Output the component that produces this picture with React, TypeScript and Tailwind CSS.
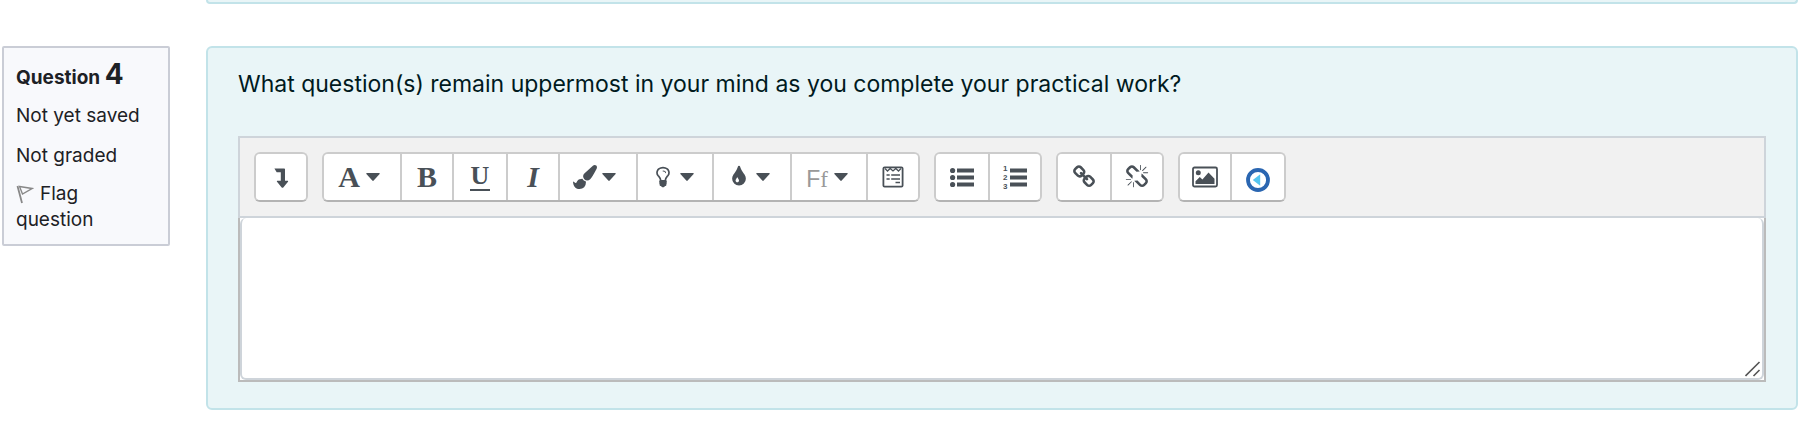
import clsx from "clsx";
import type { ReactNode } from "react";

interface ToolButtonProps {
	label: string;
	children: ReactNode;
	menu?: boolean;
	className?: string;
}

function Caret() {
	return (
		<svg viewBox="0 0 14 8" className="h-2 w-3.5 shrink-0" fill="currentColor" aria-hidden>
			<path d="M.8 0h12.4q.8.2.4.9L7.7 7.6q-.7.6-1.4 0L.4.9Q0 .2.8 0z" />
		</svg>
	);
}

function ToolButton({ label, children, menu = false, className }: ToolButtonProps) {
	return (
		<button
			type="button"
			title={label}
			aria-label={label}
			aria-haspopup={menu ? "menu" : undefined}
			className={clsx(
				"box-content flex h-[46px] items-center border-r-2 border-[#cccccc] bg-white text-[#495057] last:border-r-0 hover:bg-gray-100",
				menu ? "gap-1 pl-3" : "justify-center",
				className,
			)}
		>
			{menu ? (
				<>
					<span className="flex w-[26px] justify-center">{children}</span>
					<Caret />
				</>
			) : (
				children
			)}
		</button>
	);
}

function ToolGroup({ children }: { children: ReactNode }) {
	return (
		<div
			role="group"
			className="flex overflow-hidden rounded-md border-2 border-[#cccccc] border-b-[#b3b3b3]"
		>
			{children}
		</div>
	);
}

function GlyphIcon({ d }: { d: string }) {
	return (
		<svg viewBox="0 0 1792 1792" className="size-6 shrink-0" fill="currentColor" aria-hidden>
			<path d={d} />
		</svg>
	);
}

const BRUSH =
	"M1615 0q70 0 122.5 46.5t52.5 116.5q0 63-45 151-332 629-465 752-97 91-218 91-126 0-216.5-92.5t-90.5-219.5q0-128 92-212l638-579q59-54 130-54zm-909 1034q39 76 106.5 130t150.5 76l1 71q4 213-129.5 347t-348.5 134q-123 0-218-46.5t-152.5-127.5-86.5-183-29-220q7 5 41 30t62 44.5 59 36.5 46 17q41 0 55-37 25-66 57.5-112.5t69.5-76 88-47.5 103-25.5 125-10.5z";
const BULB =
	"M1120 576q0 13-9.5 22.5t-22.5 9.5-22.5-9.5-9.5-22.5q0-46-54-71t-106-25q-13 0-22.5-9.5t-9.5-22.5 9.5-22.5 22.5-9.5q50 0 99.5 16t87 54 37.5 90zm160 0q0-72-34.5-134t-90-101.5-123-62-136.5-22.5-136.5 22.5-123 62-90 101.5-34.5 134q0 101 68 180 10 11 30.5 33t30.5 33q128 153 141 298h228q13-145 141-298 10-11 30.5-33t30.5-33q68-79 68-180zm128 0q0 155-103 268-45 49-74.5 87t-59.5 95.5-34 107.5q47 28 47 82 0 37-25 64 25 27 25 64 0 52-45 81 13 23 13 47 0 46-31.5 71t-77.5 25q-20 44-60 70t-87 26-87-26-60-70q-46 0-77.5-25t-31.5-71q0-24 13-47-45-29-45-81 0-37 25-64-25-27-25-64 0-54 47-82-4-50-34-107.5t-59.5-95.5-74.5-87q-103-113-103-268 0-99 44.5-184.5t117-142 164-89 186.5-32.5 186.5 32.5 164 89 117 142 44.5 184.5z";
const DROP =
	"M896 1152q0-36-20-69-1-1-15.5-22.5t-25.5-38-25-44-21-50.5q-4-16-21-16t-21 16q-7 23-21 50.5t-25 44-25.5 38-15.5 22.5q-20 33-20 69 0 53 37.5 90.5t90.5 37.5 90.5-37.5 37.5-90.5zm512-128q0 212-150 362t-362 150-362-150-150-362q0-145 81-275 6-9 62.5-90.5t101-151 99.5-178 83-201.5q9-30 34-47t51-17 51.5 17 33.5 47q28 93 83 201.5t99.5 178 101 151 62.5 90.5q81 127 81 275z";
const LINK =
	"M1520 1216q0-40-28-68l-208-208q-28-28-68-28-42 0-72 32 3 3 19 18.5t21.5 21.5 15 19 13 25.5 3.5 27.5q0 40-28 68t-68 28q-15 0-27.5-3.5t-25.5-13-19-15-21.5-21.5-18.5-19q-33 31-33 73 0 40 28 68l206 207q27 27 68 27 40 0 68-26l147-146q28-28 28-67zm-703-705q0-40-28-68l-206-207q-28-28-68-28-39 0-68 27l-147 146q-28 28-28 67 0 40 28 68l208 208q27 27 68 27 42 0 72-31-3-3-19-18.5t-21.5-21.5-15-19-13-25.5-3.5-27.5q0-40 28-68t68-28q15 0 27.5 3.5t25.5 13 19 15 21.5 21.5 18.5 19q33-31 33-73zm895 705q0 120-85 203l-147 146q-83 83-203 83-121 0-204-85l-206-207q-83-83-83-203 0-123 88-209l-88-88q-86 88-208 88-120 0-204-84l-208-208q-84-84-84-204t85-203l147-146q83-83 203-83 121 0 204 85l206 207q83 83 83 203 0 123-88 209l88 88q86-88 208-88 120 0 204 84l208 208q84 84 84 204z";
const UNLINK =
	"M503 1271l-256 256q-10 9-23 9-12 0-23-9-9-10-9-23t9-23l256-256q10-9 23-9t23 9q9 10 9 23t-9 23zm169 41v320q0 14-9 23t-23 9-23-9-9-23v-320q0-14 9-23t23-9 23 9 9 23zm-224-224q0 14-9 23t-23 9h-320q-14 0-23-9t-9-23 9-23 23-9h320q14 0 23 9t9 23zm1264 128q0 120-85 203l-147 146q-83 83-203 83-121 0-204-85l-334-335q-21-21-42-56l239-18 273 274q28 28 68 27.5t68-27.5l147-146q28-28 28-67 0-40-28-68l-274-275 18-239q35 21 56 42l336 336q84 86 84 204zm-617-724l-239 18-273-274q-28-28-68-28-39 0-68 27l-147 146q-28 28-28 67 0 40 28 68l274 274-18 240q-35-21-56-42l-336-336q-84-86-84-204 0-120 85-203l147-146q83-83 203-83 121 0 204 85l334 335q21 21 42 56zm633 84q0 14-9 23t-23 9h-320q-14 0-23-9t-9-23 9-23 23-9h320q14 0 23 9t9 23zm-544-544v320q0 14-9 23t-23 9-23-9-9-23v-320q0-14 9-23t23-9 23 9 9 23zm407 151l-256 256q-11 9-23 9t-23-9q-9-10-9-23t9-23l256-256q10-9 23-9t23 9q9 10 9 23t-9 23z";

const serif = "font-['Liberation_Serif',serif] leading-none";

function Toolbar() {
	return (
		<div
			role="toolbar"
			aria-label="Editor toolbar"
			className="flex flex-wrap gap-[14px] border-2 border-[#ced4da] bg-[#f1f1f1] p-[14px]"
		>
			<ToolGroup>
				<ToolButton label="Show more buttons" className="w-[50px]">
					<svg viewBox="0 0 24 24" className="size-6" fill="currentColor" aria-hidden>
						<path d="M5.4 3.5h9.8q.8 0 .8.8v11.4h2.6q1 .2.4 1L14.3 22.4q-.8.8-1.6 0L8 16.700q-.6-.8.4-1h3.400V7.300H7.700z" />
					</svg>
				</ToolButton>
			</ToolGroup>

			<ToolGroup>
				<ToolButton label="Paragraph styles" menu className="w-16">
					<span className={clsx(serif, "text-[30px] font-bold")}>A</span>
				</ToolButton>
				<ToolButton label="Bold" className="w-[50px]">
					<span className={clsx(serif, "text-[30px] font-bold")}>B</span>
				</ToolButton>
				<ToolButton label="Underline" className="w-[52px]">
					<span className={clsx(serif, "border-b-2 border-current px-px text-[26px]/[19px] font-bold")}>U</span>
				</ToolButton>
				<ToolButton label="Italic" className="w-[50px]">
					<span className={clsx(serif, "text-[30px] font-bold italic")}>I</span>
				</ToolButton>
				<ToolButton label="Text highlight" menu className="w-16">
					<GlyphIcon d={BRUSH} />
				</ToolButton>
				<ToolButton label="Accessibility hints" menu className="w-[62px]">
					<GlyphIcon d={BULB} />
				</ToolButton>
				<ToolButton label="Font colour" menu className="w-16">
					<GlyphIcon d={DROP} />
				</ToolButton>
				<ToolButton label="Font family" menu className="w-[62px]">
					<span className="flex items-baseline pt-1 text-[#999999]">
						<span className="font-['Liberation_Sans',sans-serif] text-[23px] leading-none">F</span>
						<span className={clsx(serif, "text-[23px]")}>f</span>
					</span>
				</ToolButton>
				<ToolButton label="Insert form" className="w-[50px]">
					<svg viewBox="0 0 24 24" className="size-6" fill="none" stroke="currentColor" strokeWidth="1.8" aria-hidden>
						<rect x="2.4" y="2.4" width="19.200" height="19.200" rx="1.200" />
						<path d="M4 3.500 6.500 6 9.200 3.500 12 6l2.800-2.500L17.500 6 20 3.500" strokeWidth="1.300" />
						<path d="M5.500 10h3.200M10.200 10H19M5.500 14h3.200M10.200 14H19M14.500 17.500H19" strokeWidth="1.700" />
					</svg>
				</ToolButton>
			</ToolGroup>

			<ToolGroup>
				<ToolButton label="Unordered list" className="w-[52px]">
					<svg viewBox="0 0 24 24" className="size-6" fill="currentColor" aria-hidden>
						<circle cx="2.600" cy="5.500" r="2.600" />
						<circle cx="2.600" cy="12.500" r="2.600" />
						<circle cx="2.600" cy="19.500" r="2.600" />
						<path d="M7 3.500h17v4H7zM7 10.500h17v4H7zM7 17.500h17v4H7z" />
					</svg>
				</ToolButton>
				<ToolButton label="Ordered list" className="w-[50px]">
					<svg viewBox="0 0 24 24" className="size-6 overflow-visible" fill="currentColor" aria-hidden>
						<g className="font-['Liberation_Sans',sans-serif] text-[8px] font-bold">
							<text x="0" y="6">1</text>
							<text x="0" y="15">2</text>
							<text x="0" y="24">3</text>
						</g>
						<path d="M7 3.500h17v4H7zM7 10.500h17v4H7zM7 17.500h17v4H7z" />
					</svg>
				</ToolButton>
			</ToolGroup>

			<ToolGroup>
				<ToolButton label="Link" className="w-[52px]">
					<GlyphIcon d={LINK} />
				</ToolButton>
				<ToolButton label="Unlink" className="w-[50px]">
					<GlyphIcon d={UNLINK} />
				</ToolButton>
			</ToolGroup>

			<ToolGroup>
				<ToolButton label="Insert image" className="w-[50px]">
					<svg viewBox="0 0 26 22" className="h-[22px] w-[26px]" fill="currentColor" aria-hidden>
						<rect x="1" y="1.500" width="24" height="19" rx="1.500" fill="none" stroke="currentColor" strokeWidth="1.800" />
						<circle cx="6.300" cy="6.700" r="2.500" />
						<path d="M3.500 18v-2.800l4.300-4.200 2.600 2.600 6.100-7 6 6.200V18z" />
					</svg>
				</ToolButton>
				<ToolButton label="Insert video" className="w-[52px]">
					<span className="pt-1.5">
						<svg viewBox="0 0 24 24" className="size-6" aria-hidden>
							<circle cx="12" cy="12" r="10" fill="#ffffff" stroke="#2a66b1" strokeWidth="3.800" />
							<path d="M6.800 12 14.200 6.300v11.400z" fill="#55c5ef" />
						</svg>
					</span>
				</ToolButton>
			</ToolGroup>
		</div>
	);
}

function QuestionInfo() {
	return (
		<aside className="w-[168px] shrink-0 rounded-xs border-2 border-[#cacdd6] bg-[#f8f9fc] px-3 pt-2 pb-[11px] text-[19px]/[26px] text-[#1d2125]">
			<h3 className="font-bold">
				Question <span className="text-[28px]/[36px]">4</span>
			</h3>
			<p className="mt-[11px]">Not yet saved</p>
			<p className="mt-3.5">Not graded</p>
			<a href="#flag" className="mt-3 block">
				<svg viewBox="0 0 18 20" className="mr-1.5 inline h-5 w-[18px] align-[-4px]" fill="none" stroke="#888888" aria-hidden>
					<path d="M1.500 2 6 19" strokeWidth="1.800" />
					<path d="M3.500 2.500 16 4.500 6.500 10z" strokeWidth="1.400" />
				</svg>
				Flag question
			</a>
		</aside>
	);
}

export default function App() {
	return (
		<main className="bg-white pr-2 pl-0.5 font-['Inter',sans-serif]">
			{/* tail of the previous question */}
			<div className="ml-[204px] h-1 rounded-b-md border-2 border-t-0 border-[#c2e3e9] bg-[#e9f5f7]" />

			<div className="mt-[42px] flex items-start gap-9">
				<QuestionInfo />

				<section className="min-w-0 flex-1 rounded-md border-2 border-[#c2e3e9] bg-[#e9f5f7] px-[30px] pt-[18px] pb-[26px]">
					<label htmlFor="answer" className="block text-[23px]/[36px] text-[#001a1e]">
						What question(s) remain uppermost in your mind as you complete your practical work?
					</label>

					<div className="mt-[34px]">
						<Toolbar />
						<div className="relative border-2 border-t-0 border-[#bbbbbb] bg-white">
							<textarea
								id="answer"
								className="block h-[162px] w-full resize-none rounded-md border-2 border-t-0 border-[#ced4da] bg-white p-3 text-[23px]/[36px] outline-none"
							/>
							<svg
								viewBox="0 0 16 16"
								className="pointer-events-none absolute right-[3px] bottom-[3px] size-4"
								fill="none"
								stroke="#555555"
								strokeWidth="1.600"
								aria-hidden
							>
								<path d="M.500 15 14.500 1M8.500 15l6-6" />
							</svg>
						</div>
					</div>
				</section>
			</div>
		</main>
	);
}
